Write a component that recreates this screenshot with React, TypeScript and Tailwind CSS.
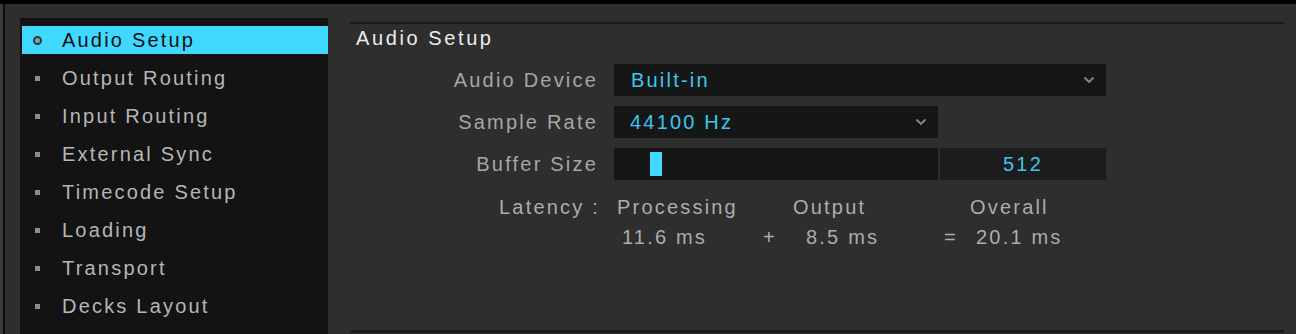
const menuItems = [
  "Audio Setup",
  "Output Routing",
  "Input Routing",
  "External Sync",
  "Timecode Setup",
  "Loading",
  "Transport",
  "Decks Layout",
];

function Chevron() {
  return (
    <svg width="12" height="8" viewBox="0 0 12 8" className="shrink-0">
      <path d="M1.5 1.5 L6 6 L10.5 1.5" fill="none" stroke="#8a8a8a" strokeWidth="1.8" />
    </svg>
  );
}

function Sidebar() {
  return (
    <div className="ml-[15px] mt-[14px] w-[308px] shrink-0 bg-[#131313] pt-[8px] pl-[2px]">
      <ul className="flex flex-col gap-[10px]">
        {menuItems.map((item, i) => {
          const active = i === 0;
          return (
            <li
              key={item}
              className={
                active
                  ? "flex h-[28px] items-center bg-[#40d8ff] text-[#111]"
                  : "flex h-[28px] items-center text-[#b6b6b6]"
              }
            >
              <span className="ml-[10px] flex w-[10px] justify-center">
                {active ? (
                  <span className="h-[9px] w-[9px] rounded-full border-2 border-[#1c3f4a] bg-[#9a9a9a]" />
                ) : (
                  <span className="h-[5px] w-[5px] bg-[#8e8e8e]" />
                )}
              </span>
              <span className="ml-[20px]">{item}</span>
            </li>
          );
        })}
      </ul>
    </div>
  );
}

function Row({ label, children }: { label: string; children: React.ReactNode }) {
  return (
    <div className="flex h-[32px] items-center">
      <div className="w-[248px] text-right text-[#a6a6a6]">{label}</div>
      <div className="ml-[16px] flex h-full">{children}</div>
    </div>
  );
}

export default function App() {
  return (
    <div
      className="flex h-[334px] w-[1296px] overflow-hidden border-t-4 border-black bg-[#2e2e2e] text-[20px] leading-[24px] tracking-[2.2px]"
      style={{ fontFamily: '"Liberation Sans", Arial, sans-serif' }}
    >
      <div className="w-[3px] shrink-0 bg-[#3a3a3a]" />
      <div className="w-[2px] shrink-0 bg-[#0c0c0c]" />

      <Sidebar />

      {/* Settings panel */}
      <div className="ml-[22px] mt-[18px] h-[311px] w-[934px] shrink-0 border-t-2 border-b-[3px] border-[#1a1a1a]">
        <h2 className="pl-[6px] pt-[2px] tracking-[2.6px] text-[#ececec]">Audio Setup</h2>

        <div className="mt-[14px] flex flex-col gap-[10px]">
          <Row label="Audio Device">
            <div className="flex w-[492px] items-center justify-between bg-[#151616] pl-[17px] pr-[11px] text-[#3cc6ee]">
              <span>Built-in</span>
              <Chevron />
            </div>
          </Row>
          <Row label="Sample Rate">
            <div className="flex w-[324px] items-center justify-between bg-[#151616] pl-[16px] pr-[11px] text-[#3cc6ee]">
              <span>44100 Hz</span>
              <Chevron />
            </div>
          </Row>
          <Row label="Buffer Size">
            <div className="flex w-[324px] items-center bg-[#151616] pl-[36px]">
              <div className="h-[24px] w-[12px] bg-[#40d8ff]" />
            </div>
            <div className="ml-[2px] flex w-[166px] items-center justify-center bg-[#1c1c1c] text-[#3cc6ee]">
              512
            </div>
          </Row>
        </div>

        {/* Latency */}
        <div className="mt-[12px] text-[#acacac]">
          <div className="flex h-[30px] items-center">
            <span className="w-[250px] text-right">Latency :</span>
            <span className="ml-[17px] w-[176px]">Processing</span>
            <span className="w-[177px]">Output</span>
            <span>Overall</span>
          </div>
          <div className="flex h-[30px] items-center">
            <span className="ml-[272px] w-[141px]">11.6 ms</span>
            <span className="w-[43px]">+</span>
            <span className="w-[138px]">8.5 ms</span>
            <span className="w-[32px]">=</span>
            <span>20.1 ms</span>
          </div>
        </div>
      </div>
    </div>
  );
}
